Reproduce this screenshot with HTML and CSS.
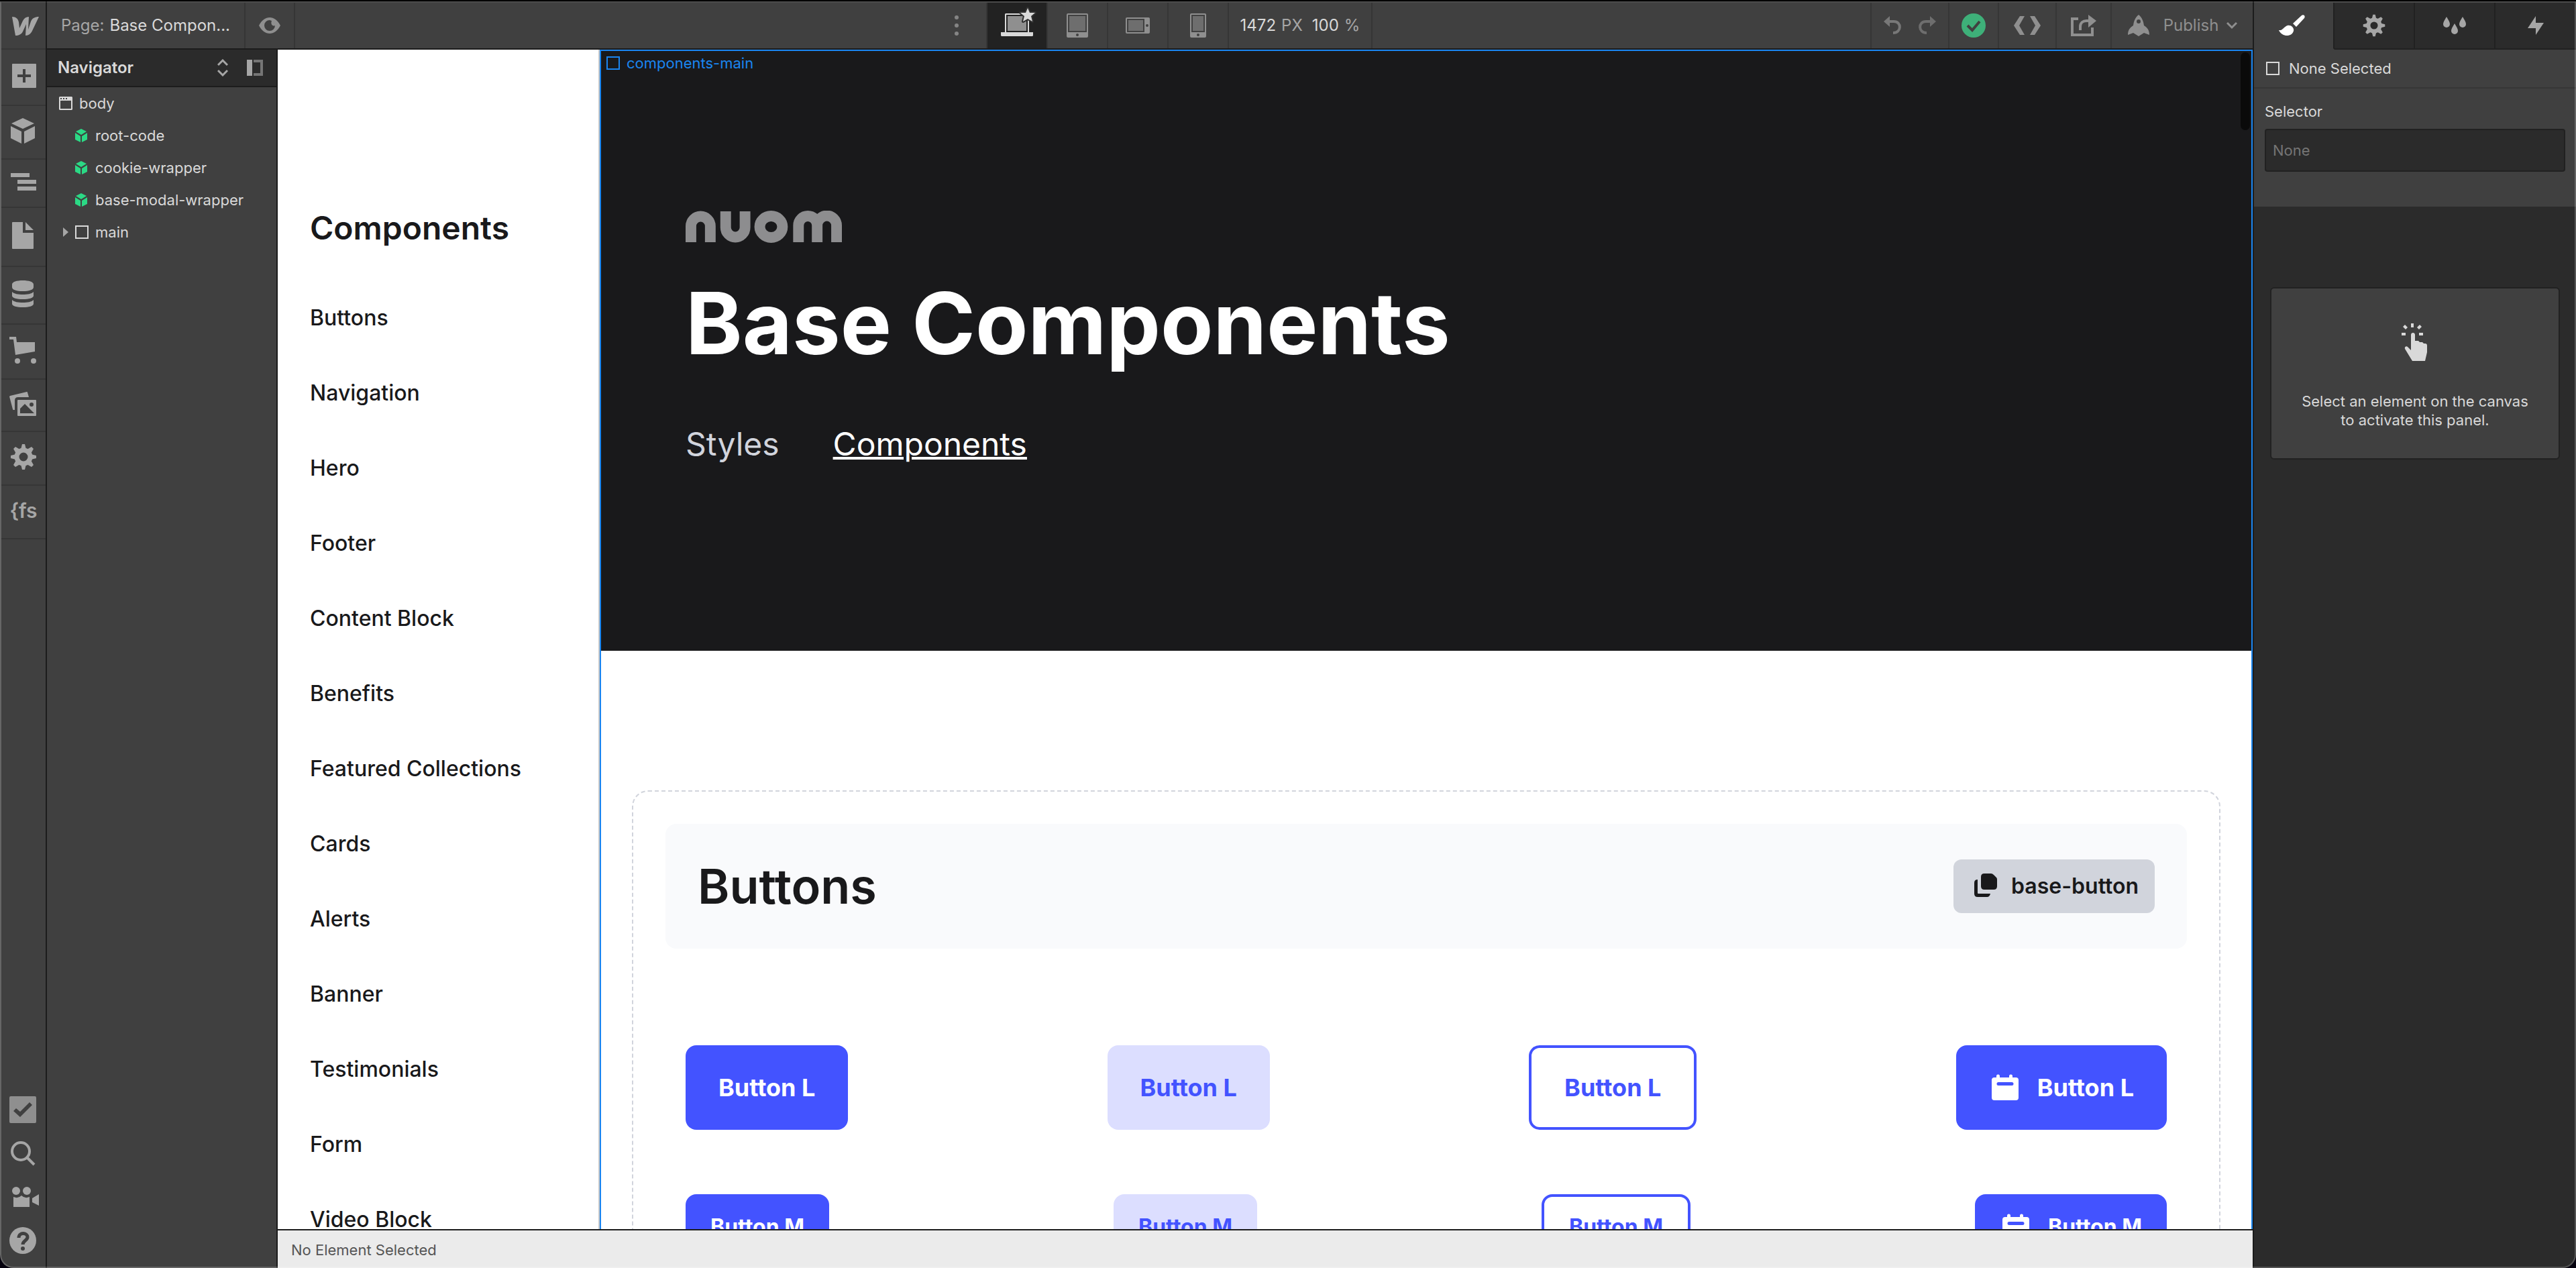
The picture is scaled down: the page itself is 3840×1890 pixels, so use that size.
FILE: index.html
```html
<!DOCTYPE html>
<html lang="en">
<head>
<meta charset="utf-8">
<title>Base Components – Designer</title>
<link rel="stylesheet" href="styles.css">
</head>
<body>
<div class="window">
  <nav class="rail" aria-label="Tools">
    <button class="rail-logo" aria-label="Menu"><svg class="icon-44" viewBox="0 0 44 44"><path fill="#a6a6a6" d="M5 10c6 0 9 3 10 8l1 9 5-11c2-4 5-6 9-6l-1 19 4-12c2-5 6-7 12-7L35 31c-2 4-5 7-10 7l1-17-5 11c-2 4-6 6-11 6z"/></svg></button>
    <button class="rail-item h84" aria-label="Add"><svg class="icon-44" viewBox="0 0 44 44"><path fill="currentColor" fill-rule="evenodd" d="M6 4h34a1 1 0 0 1 1 1v34a1 1 0 0 1-1 1H6a1 1 0 0 1-1-1V5a1 1 0 0 1 1-1zm15 8v8h-8v4h8v8h4v-8h8v-4h-8v-8z"/></svg></button>
    <button class="rail-item h80" aria-label="Components"><svg class="icon-44" viewBox="0 0 44 44"><path fill="currentColor" d="M21 3l17 8-17 8-17-8zM3 15l16 8v18L3 33zM39 15l-16 8v18l16-8z"/></svg></button>
    <button class="rail-item h72" aria-label="Navigator"><svg class="icon-44" viewBox="0 0 44 44"><path fill="currentColor" d="M3 9h28v6H3zM13 19h28v6H13zM13 29h28v6H13z"/></svg></button>
    <button class="rail-item h88" aria-label="Pages"><svg class="icon-44" viewBox="0 0 44 44"><path fill="currentColor" d="M6 2h15v16h16v23a1 1 0 0 1-1 1H6a1 1 0 0 1-1-1V3a1 1 0 0 1 1-1zM25 2l12 12H25z"/></svg></button>
    <button class="rail-item h86" aria-label="CMS"><svg class="icon-44" viewBox="0 0 44 44"><path fill="currentColor" d="M5 8c0-4 7-6 16-6s16 2 16 6v4c0 4-7 6-16 6S5 16 5 12zM5 19c3 3 9 4 16 4s13-1 16-4v6c0 3-7 5-16 5S5 28 5 25zM5 31c3 3 9 4 16 4s13-1 16-4v6c0 3-7 5-16 5S5 40 5 37z"/></svg></button>
    <button class="rail-item h82" aria-label="Ecommerce"><svg class="icon-44" viewBox="0 0 44 44"><path fill="currentColor" d="M1 2h10l1 8h27v14l-29 5L7 6H1z"/><circle cx="13" cy="38" r="4" fill="currentColor"/><circle cx="37" cy="38" r="4" fill="currentColor"/></svg></button>
    <button class="rail-item h78" aria-label="Assets"><svg class="icon-44" viewBox="0 0 44 44"><path fill="currentColor" d="M2 10l25-6q1 0 1 1l2 7H14q-5 0-5 5v14H7q-1 0-1-1L1 11z"/><path fill="currentColor" fill-rule="evenodd" d="M14 16h26a1 1 0 0 1 1 1v22a1 1 0 0 1-1 1H14a1 1 0 0 1-1-1V17a1 1 0 0 1 1-1zm3 20h21L24 22l-7 7zm17-16a3 3 0 1 0 0 6 3 3 0 0 0 0-6z"/></svg></button>
    <button class="rail-item h80" aria-label="Settings"><svg class="icon-44" viewBox="0 0 44 44"><use href="#gear"/></svg></button>
    <button class="rail-item h80 rail-fs" aria-label="Finsweet">{fs</button>
    <div class="rail-foot">
      <button aria-label="Audit"><svg class="icon-44" viewBox="0 0 44 44"><path fill="#8f8f8f" fill-rule="evenodd" d="M3 2h36a2 2 0 0 1 2 2v36a2 2 0 0 1-2 2H3a2 2 0 0 1-2-2V4a2 2 0 0 1 2-2zm28 9L17 25l-6-5-4 4 10 9 18-18z"/></svg></button>
      <button aria-label="Search"><svg class="icon-44" viewBox="0 0 44 44"><circle cx="18" cy="19" r="13" fill="none" stroke="currentColor" stroke-width="4"/><path d="M27 28l11 11" stroke="currentColor" stroke-width="4"/></svg></button>
      <button aria-label="Video tutorials"><svg class="icon-44" viewBox="0 0 44 44"><g fill="currentColor"><circle cx="11" cy="13" r="6"/><circle cx="27" cy="13" r="6"/><path d="M7 22q7 3 12-2 5 5 12 2v15H7zM35 24l10-6v17l-10-5z"/></g></svg></button>
      <button aria-label="Help"><svg class="icon-44" viewBox="0 0 44 44"><circle cx="21" cy="22" r="20" fill="currentColor"/><path d="M15 18c0-9 13-8 13-1 0 5-7 5-7 11" fill="none" stroke="#404040" stroke-width="5"/><circle cx="21" cy="34" r="3" fill="#404040"/></svg></button>
    </div>
  </nav>

  <header class="topbar">
    <div class="bar-group">
      <button class="page-name"><span>Page:</span> <b>Base Compon...</b></button>
      <button class="eye" aria-label="Preview"><svg width="32" height="24" viewBox="0 0 32 24"><path fill="currentColor" fill-rule="evenodd" d="M0 12C8-4 24-4 32 12 24 28 8 28 0 12zM16 4a8 8 0 1 0 8 8c-4 2-7-2-5-7z"/></svg></button>
    </div>
    <div class="bar-group">
      <button class="bp" aria-label="More"><svg width="6" height="32" viewBox="0 0 6 32" fill="#858585"><circle cx="3" cy="4" r="3"/><circle cx="3" cy="16" r="3"/><circle cx="3" cy="28" r="3"/></svg></button>
      <button class="bp bp-on" aria-label="Desktop"><svg width="52" height="44" viewBox="0 0 52 44" overflow="visible"><path fill="#d9d9d9" d="M9 4h34l1 1v27H8V5z"/><path fill="#222" d="M10 6h32v26H10z"/><path fill="#8f8f8f" d="M12 8h28v22H12z"/><path fill="#d9d9d9" d="M2 32h48v5l-1 1H3l-1-1z"/><path fill="#d9d9d9" stroke="#303030" stroke-width="4" paint-order="stroke" stroke-linejoin="round" d="M42-4l3 7h8l-6 5 2 8-7-4-7 4 2-8-6-5h8z"/></svg></button>
      <button class="bp" aria-label="Tablet"><svg width="32" height="36" viewBox="0 0 32 36"><rect width="32" height="36" rx="2" fill="#8f8f8f"/><path fill="#404040" d="M2 2h28v26H2z"/><path fill="#6e6e6e" d="M4 4h24v22H4z"/><circle cx="16" cy="32" r="2" fill="#404040"/></svg></button>
      <button class="bp" aria-label="Mobile landscape"><svg width="36" height="24" viewBox="0 0 36 24"><rect width="36" height="24" rx="2" fill="#8f8f8f"/><path fill="#404040" d="M2 2h26v20H2z"/><path fill="#6e6e6e" d="M4 4h22v16H4z"/><circle cx="32" cy="12" r="2" fill="#404040"/></svg></button>
      <button class="bp" aria-label="Mobile portrait"><svg width="24" height="36" viewBox="0 0 24 36"><rect width="24" height="36" rx="2" fill="#8f8f8f"/><path fill="#404040" d="M2 2h20v26H2z"/><path fill="#6e6e6e" d="M4 4h16v22H4z"/><circle cx="12" cy="32" r="2" fill="#404040"/></svg></button>
      <button class="zoom"><b>1472</b><span>PX</span><b>100</b><span>%</span></button>
    </div>
    <div class="bar-group bar-end">
      <div class="history">
        <button aria-label="Undo"><svg width="28" height="28" viewBox="0 0 28 28"><path fill="#787878" d="M0 8l9-8v16z"/><path d="M8 8h7c12 0 12 17-1 17" fill="none" stroke="#787878" stroke-width="4"/></svg></button>
        <button aria-label="Redo"><svg width="28" height="28" viewBox="0 0 28 28"><path fill="#6e6e6e" d="M28 8l-9-8v16z"/><path d="M20 8h-7C1 8 1 25 14 25" fill="none" stroke="#6e6e6e" stroke-width="4"/></svg></button>
      </div>
      <button class="w74" aria-label="Saved"><svg width="36" height="36" viewBox="0 0 36 36"><circle cx="18" cy="18" r="18" fill="#3eb079"/><path d="M9 18l7 7L27 12" fill="none" stroke="#404040" stroke-width="4"/></svg></button>
      <button class="w86" aria-label="Export code"><svg width="40" height="28" viewBox="0 0 40 28" fill="currentColor"><path d="M9 0h7L8 14l8 14H9L0 14zM31 0h-7l8 14-8 14h7l9-14z"/></svg></button>
      <button class="w82" aria-label="Share"><svg width="38" height="32" viewBox="0 0 38 32" fill="none" stroke="currentColor"><path stroke-width="4" d="M11 6H2v24h30V19"/><path stroke-width="4" d="M14 23v-5c0-6 4-9 9-9h4"/><path fill="currentColor" stroke="none" d="M26 0l12 9-12 10z"/></svg></button>
      <button class="publish"><svg width="34" height="32" viewBox="0 0 34 32"><path fill="currentColor" fill-rule="evenodd" d="M17 0c5 4 7 9 8 16 5 3 8 7 8 14l-8-3-8 5-8-5-8 3c0-7 3-11 8-14 1-7 3-12 8-16zm0 7a3 3 0 1 0 0 6 3 3 0 0 0 0-6z"/></svg><span>Publish</span><svg width="16" height="12" viewBox="0 0 16 12"><path d="M1 2l7 7 7-7" fill="none" stroke="currentColor" stroke-width="3"/></svg></button>
    </div>
  </header>

  <aside class="navigator">
    <div class="navigator-head">
      <h2>Navigator</h2>
      <button aria-label="Expand all"><svg width="16" height="26" viewBox="0 0 16 26"><path d="M1 9l7-7 7 7M1 17l7 7 7-7" fill="none" stroke="#a6a6a6" stroke-width="3"/></svg></button>
      <button aria-label="Dock panel"><svg width="24" height="24" viewBox="0 0 24 24"><path fill="#a6a6a6" d="M0 0h8v24H0z"/><path fill="#757575" d="M10 0h14v24H10v-4h10V4H10z"/></svg></button>
    </div>
    <ul class="tree">
      <li class="tree-body"><svg width="20" height="20" viewBox="0 0 20 20"><path fill="#d9d9d9" fill-rule="evenodd" d="M1 0h18l1 1v18l-1 1H1l-1-1V1zm1 6v12h16V6zm0-4v2h2V2zm4 0v2h2V2zm4 0v2h2V2z"/></svg>body</li>
      <li><svg width="20" height="20" viewBox="0 0 20 20"><use href="#cube"/></svg>root-code</li>
      <li><svg width="20" height="20" viewBox="0 0 20 20"><use href="#cube"/></svg>cookie-wrapper</li>
      <li><svg width="20" height="20" viewBox="0 0 20 20"><use href="#cube"/></svg>base-modal-wrapper</li>
      <li class="tree-main"><svg width="8" height="14" viewBox="0 0 8 14"><path fill="#a6a6a6" d="M0 0l8 7-8 7z"/></svg><i class="box"></i>main</li>
    </ul>
  </aside>

  <section class="canvas">
    <nav class="site-nav">
      <h2>Components</h2>
      <a href="#">Buttons</a>
      <a href="#">Navigation</a>
      <a href="#">Hero</a>
      <a href="#">Footer</a>
      <a href="#">Content Block</a>
      <a href="#">Benefits</a>
      <a href="#">Featured Collections</a>
      <a href="#">Cards</a>
      <a href="#">Alerts</a>
      <a href="#">Banner</a>
      <a href="#">Testimonials</a>
      <a href="#">Form</a>
      <a href="#">Video Block</a>
    </nav>
    <main class="site-main">
      <div class="outline-label"><i class="box"></i>components-main</div>
      <div class="scroll-thumb"></div>
      <header class="hero">
        <svg class="brand" role="img" aria-label="nuom" width="234" height="48" viewBox="0 0 235 48" fill="none" stroke="#8d8d8f" stroke-width="16"><path d="M8 47V23a14 14 0 0 1 29 0v24"/><path d="M60 1v24a14 14 0 0 0 29 0V1"/><ellipse cx="128" cy="24" rx="17" ry="16"/><path d="M169 47V22a14 14 0 0 1 28 0v25M197 47V22a14 14 0 0 1 29 0v25"/></svg>
        <h1>Base Components</h1>
        <div class="hero-links"><a href="#">Styles</a><a href="#" class="current">Components</a></div>
      </header>
      <section class="block">
        <div class="block-head">
          <h2>Buttons</h2>
          <button class="chip"><svg width="48" height="48" viewBox="0 0 48 48" fill="currentColor"><path d="M17 10q0-5 5-5h10q2 0 4 2l4 4q1 1 1 3v10q0 5-5 5H22q-5 0-5-5z"/><path d="M12 14v20q0 1 1 1h18q-1 5-5 5H12q-5 0-5-5V19q0-5 5-5z"/></svg>base-button</button>
        </div>
        <div class="row">
          <button class="btn solid">Button L</button>
          <button class="btn soft">Button L</button>
          <button class="btn line">Button L</button>
          <button class="btn solid"><svg width="48" height="48" viewBox="0 0 48 48"><use href="#cal"/></svg>Button L</button>
        </div>
        <div class="row">
          <button class="btn m solid">Button M</button>
          <button class="btn m soft">Button M</button>
          <button class="btn m line">Button M</button>
          <button class="btn m solid"><svg width="48" height="48" viewBox="0 0 48 48"><use href="#cal"/></svg>Button M</button>
        </div>
      </section>
    </main>
  </section>
  <footer class="status">No Element Selected</footer>

  <aside class="panel">
    <div class="tabs">
      <button class="tab-on" aria-label="Style"><svg width="40" height="32" viewBox="0 0 40 32" fill="#fff"><path d="M0 23c6 1 7-5 13-7 6-1 10 4 9 8-2 9-17 10-22-1zM21 13L34 1c3-2 6 1 4 4L26 18z"/></svg></button>
      <button aria-label="Settings"><svg width="36" height="36" viewBox="1 1 42 42"><use href="#gear"/></svg></button>
      <button aria-label="Style manager"><svg width="36" height="28" viewBox="0 0 36 28" fill="currentColor"><path d="M6 1c3 5 5 8 5 11a5 5 0 0 1-10 0c0-3 2-6 5-11zM30 1c3 5 5 8 5 11a5 5 0 0 1-10 0c0-3 2-6 5-11zM18 11c3 5 5 8 5 11a5 5 0 0 1-10 0c0-3 2-6 5-11z"/></svg></button>
      <button aria-label="Interactions"><svg width="24" height="28" viewBox="0 0 24 28" fill="currentColor"><path d="M12 0v10h12L12 28V18H0z"/></svg></button>
    </div>
    <div class="selection"><i class="box"></i>None Selected</div>
    <div class="selector">
      <label for="selector">Selector</label>
      <input id="selector" type="text" placeholder="None">
    </div>
    <div class="empty">
      <svg width="40" height="56" viewBox="0 0 40 56" fill="#d9d9d9"><path d="M14 0h4v6h-4zM0 14h6v4H0zM26 14h6v4h-6zM2 5l3-3 4 4-3 3zM23 6l4-4 3 3-4 4zM14 17c0-4 6-4 6 0v9h5l2 2h4l2 2h2q3 0 3 3v10l-3 13H16L5 38c-1-3 2-5 4-3l5 5z"/></svg>
      <p>Select an element on the canvas to activate this panel.</p>
    </div>
  </aside>
</div>
<svg class="defs" width="0" height="0" aria-hidden="true">
  <g id="gear"><circle cx="22" cy="22" r="10" fill="none" stroke="currentColor" stroke-width="7"/><path fill="currentColor" d="M20 3h4l2 8h-8zM20 41h4l2-8h-8zM3 20v4l8 2v-8zM41 20v4l-8 2v-8zM7 10l3-3 7 4-6 6zM34 7l3 3-4 7-6-6zM37 34l-3 3-7-4 6-6zM10 37l-3-3 4-7 6 6z"/></g>
  <g id="cube" fill="#2bd985"><path d="M10 0l8 4-8 5-8-5zM1 6l8 5v9l-8-4zM19 6l-8 5v9l8-4z"/></g>
  <g id="cal" fill="currentColor"><path fill-rule="evenodd" d="M8 9h3V7a2 2 0 0 1 5 0v2h14V7a2 2 0 0 1 5 0v2h5q4 0 4 4v26q0 4-4 4H8q-4 0-4-4V13q0-4 4-4zm6 7a2 2 0 0 0 0 5h20a2 2 0 0 0 0-5z"/></g>
</svg>
</body>
</html>
```
FILE: styles.css
```css
* { box-sizing: border-box; }
body {
  margin: 0;
  background: #06030f;
  font-family: Inter, "Liberation Sans", sans-serif;
  font-size: 22px;
  line-height: 28px;
  color: #d9d9d9;
}
h1, h2, p, ul { margin: 0; padding: 0; }
ul { list-style: none; }
a { color: inherit; text-decoration: none; }
b { font-weight: 400; }
svg { display: block; flex: none; }
button {
  display: flex;
  align-items: center;
  justify-content: center;
  margin: 0;
  padding: 0;
  border: 0;
  background: none;
  color: #a6a6a6;
  font: inherit;
}
.defs { position: absolute; }
.box { flex: none; width: 20px; height: 20px; border: 2px solid currentColor; }
.icon-44 { width: 44px; height: 44px; overflow: visible; }

.window {
  position: relative;
  display: grid;
  grid-template: 72px minmax(0, 1fr) 58px / 70px 344px minmax(0, 1fr) 482px;
  height: 100vh;
  padding-top: 2px;
  border-radius: 0 0 20px 20px;
  background: #404040;
  overflow: hidden;
}
.window::before {
  content: "";
  position: absolute;
  inset: 0 0 auto;
  height: 2px;
  background: #000;
}
.window::after {
  content: "";
  position: absolute;
  inset: 2px 0 0;
  border: 2px solid rgba(255, 255, 255, .2);
  border-top-color: rgba(255, 255, 255, .06);
  border-radius: 0 0 20px 20px;
  pointer-events: none;
}

/* tool rail */
.rail {
  grid-row: 1 / 4;
  display: flex;
  flex-direction: column;
  padding-left: 2px;
  padding-bottom: 9px;
  border-right: 2px solid #1c1c1c;
}
.rail-logo { height: 72px; border-bottom: 2px solid #363636; }
.rail-item { border-bottom: 2px solid #363636; padding-bottom: 4px; }
.h72 { height: 72px; }
.h78 { height: 78px; }
.h80 { height: 80px; }
.h82 { height: 82px; }
.h84 { height: 84px; }
.h86 { height: 86px; }
.h88 { height: 88px; }
.rail-fs { font-size: 30px; font-weight: 600; }
.rail-foot { margin-top: auto; }
.rail-foot button { width: 100%; height: 65px; }

/* top bar */
.topbar {
  grid-column: 2 / 4;
  display: grid;
  grid-template-columns: 1fr auto 1fr;
  border-bottom: 2px solid #1c1c1c;
  padding-top: 2px;
}
.bar-group { display: flex; font-size: 24px; }
.bar-group > * { border-right: 2px solid #363636; }
.page-name { width: 296px; gap: 8px; color: #a6a6a6; }
.page-name b, .zoom b { color: #d9d9d9; }
.eye { width: 74px; color: #8f8f8f; }
.bp { width: 90px; }
.bp-on { background: #222; }
.zoom { width: 214px; gap: 8px; }
.zoom span + b { margin-left: 6px; }
.bar-end { justify-content: flex-end; }
.bar-end > * { color: #8f8f8f; }
.history { display: flex; justify-content: center; gap: 22px; width: 118px; border-left: 2px solid #363636; }
.w74 { width: 74px; }
.w86 { width: 86px; }
.w82 { width: 82px; }
.publish { width: 210px; gap: 20px; border-right-color: #363636; border-right-width: 0; }
.publish svg:last-child { margin-left: -8px; }

/* navigator */
.navigator { grid-row: 2 / 4; border-right: 2px solid #1c1c1c; }
.navigator-head {
  display: flex;
  align-items: center;
  gap: 28px;
  height: 56px;
  padding: 0 20px 0 16px;
  background: #2b2b2b;
  border-bottom: 2px solid #1c1c1c;
}
.navigator-head h2 { flex: 1; font-size: 24px; font-weight: 600; }
.tree li { display: flex; align-items: center; gap: 11px; height: 48px; padding-left: 41px; }
.tree .tree-body { padding-left: 18px; gap: 10px; }
.tree .tree-main { padding-left: 24px; gap: 10px; }

/* canvas */
.canvas { display: grid; grid-template-columns: 480px minmax(0, 1fr); overflow: hidden; background: #fff; color: #19191b; }
.site-nav {
  display: flex;
  flex-direction: column;
  gap: 72px;
  padding: 236px 0 0 48px;
  border-right: 2px solid #ccc;
  font-size: 32px;
  font-weight: 500;
  line-height: 40px;
  white-space: nowrap;
}
.site-nav h2 { font-size: 48px; font-weight: 600; line-height: 60px; margin-bottom: 12px; }
.site-main { position: relative; }
.site-main::after { content: ""; position: absolute; inset: 0; border: 2px solid #1a85f0; border-bottom: 0; pointer-events: none; }
.outline-label { position: absolute; top: 6px; left: 10px; display: flex; align-items: center; gap: 10px; color: #1a85f0; }
.scroll-thumb { position: absolute; top: 4px; right: 4px; width: 14px; height: 116px; border-radius: 7px; background: #0a0a0a; }
.hero { height: 896px; padding: 240px 128px 0; background: #19191b; color: #fff; }
.hero h1 { margin-top: 40px; font-size: 128px; font-weight: 700; line-height: 160px; }
.hero-links { display: flex; gap: 80px; margin-top: 70px; font-size: 48px; line-height: 60px; color: #d1d4dc; }
.hero-links .current { color: #fff; text-decoration: underline; text-decoration-thickness: 4px; }

.block { margin: 208px 48px 0; padding: 48px; border: 2px dashed #d1d4dc; border-radius: 24px; }
.block-head { display: flex; align-items: center; justify-content: space-between; padding: 48px; margin-bottom: 144px; border-radius: 16px; background: #f9fafc; }
.block-head h2 { font-size: 72px; font-weight: 600; line-height: 90px; }
.chip { height: 80px; padding: 0 24px; gap: 14px; border-radius: 12px; background: #d1d4dc; color: #19191b; font-size: 32px; font-weight: 600; }
.row { display: flex; justify-content: space-between; margin-bottom: 96px; padding: 0 30px; }
.btn { height: 126px; padding: 0 49px; gap: 24px; border-radius: 16px; font-size: 36px; font-weight: 700; white-space: nowrap; }
.btn.m { height: 98px; padding: 0 37px; font-size: 32px; }
.solid { background: #4353ff; color: #fff; }
.soft { background: #dcdeff; color: #4353ff; }
.line { border: 4px solid #4353ff; color: #4353ff; background: #fff; }

.status { padding: 15px 20px 0; border-top: 2px solid #1c1c1c; background: #ebebeb; color: #555; grid-column: 3; }

/* style panel */
.panel { grid-area: 1 / 4 / 4 / 5; background: #2b2b2b; border-left: 2px solid #1c1c1c; }
.tabs { display: grid; grid-template-columns: repeat(4, 1fr); height: 72px; padding-top: 2px; background: #404040; }
.tabs button { background: #2b2b2b; border-bottom: 2px solid #212121; border-right: 2px solid #212121; }
.tabs .tab-on { background: #404040; border-bottom-color: #404040; padding-right: 4px; }
.tabs button:last-child { border-right: 0; }
.selection { display: flex; align-items: center; gap: 14px; height: 58px; padding: 0 18px; border-bottom: 2px solid #363636; background: #404040; }
.selector { display: flex; flex-direction: column; gap: 12px; height: 176px; padding: 20px 16px 0; background: #404040; }
.selector label { height: 28px; }
.selector input {
  height: 64px;
  padding: 0 10px;
  border: 2px solid #212121;
  border-radius: 4px;
  background: #2b2b2b;
  color: #d9d9d9;
  font: inherit;
}
.selector input::placeholder { color: #757575; opacity: 1; }
.empty {
  display: flex;
  flex-direction: column;
  align-items: center;
  gap: 46px;
  margin: 120px 24px 0;
  padding: 52px 36px 43px;
  border: 2px solid #212121;
  border-radius: 6px;
  background: #404040;
  text-align: center;
}
```
